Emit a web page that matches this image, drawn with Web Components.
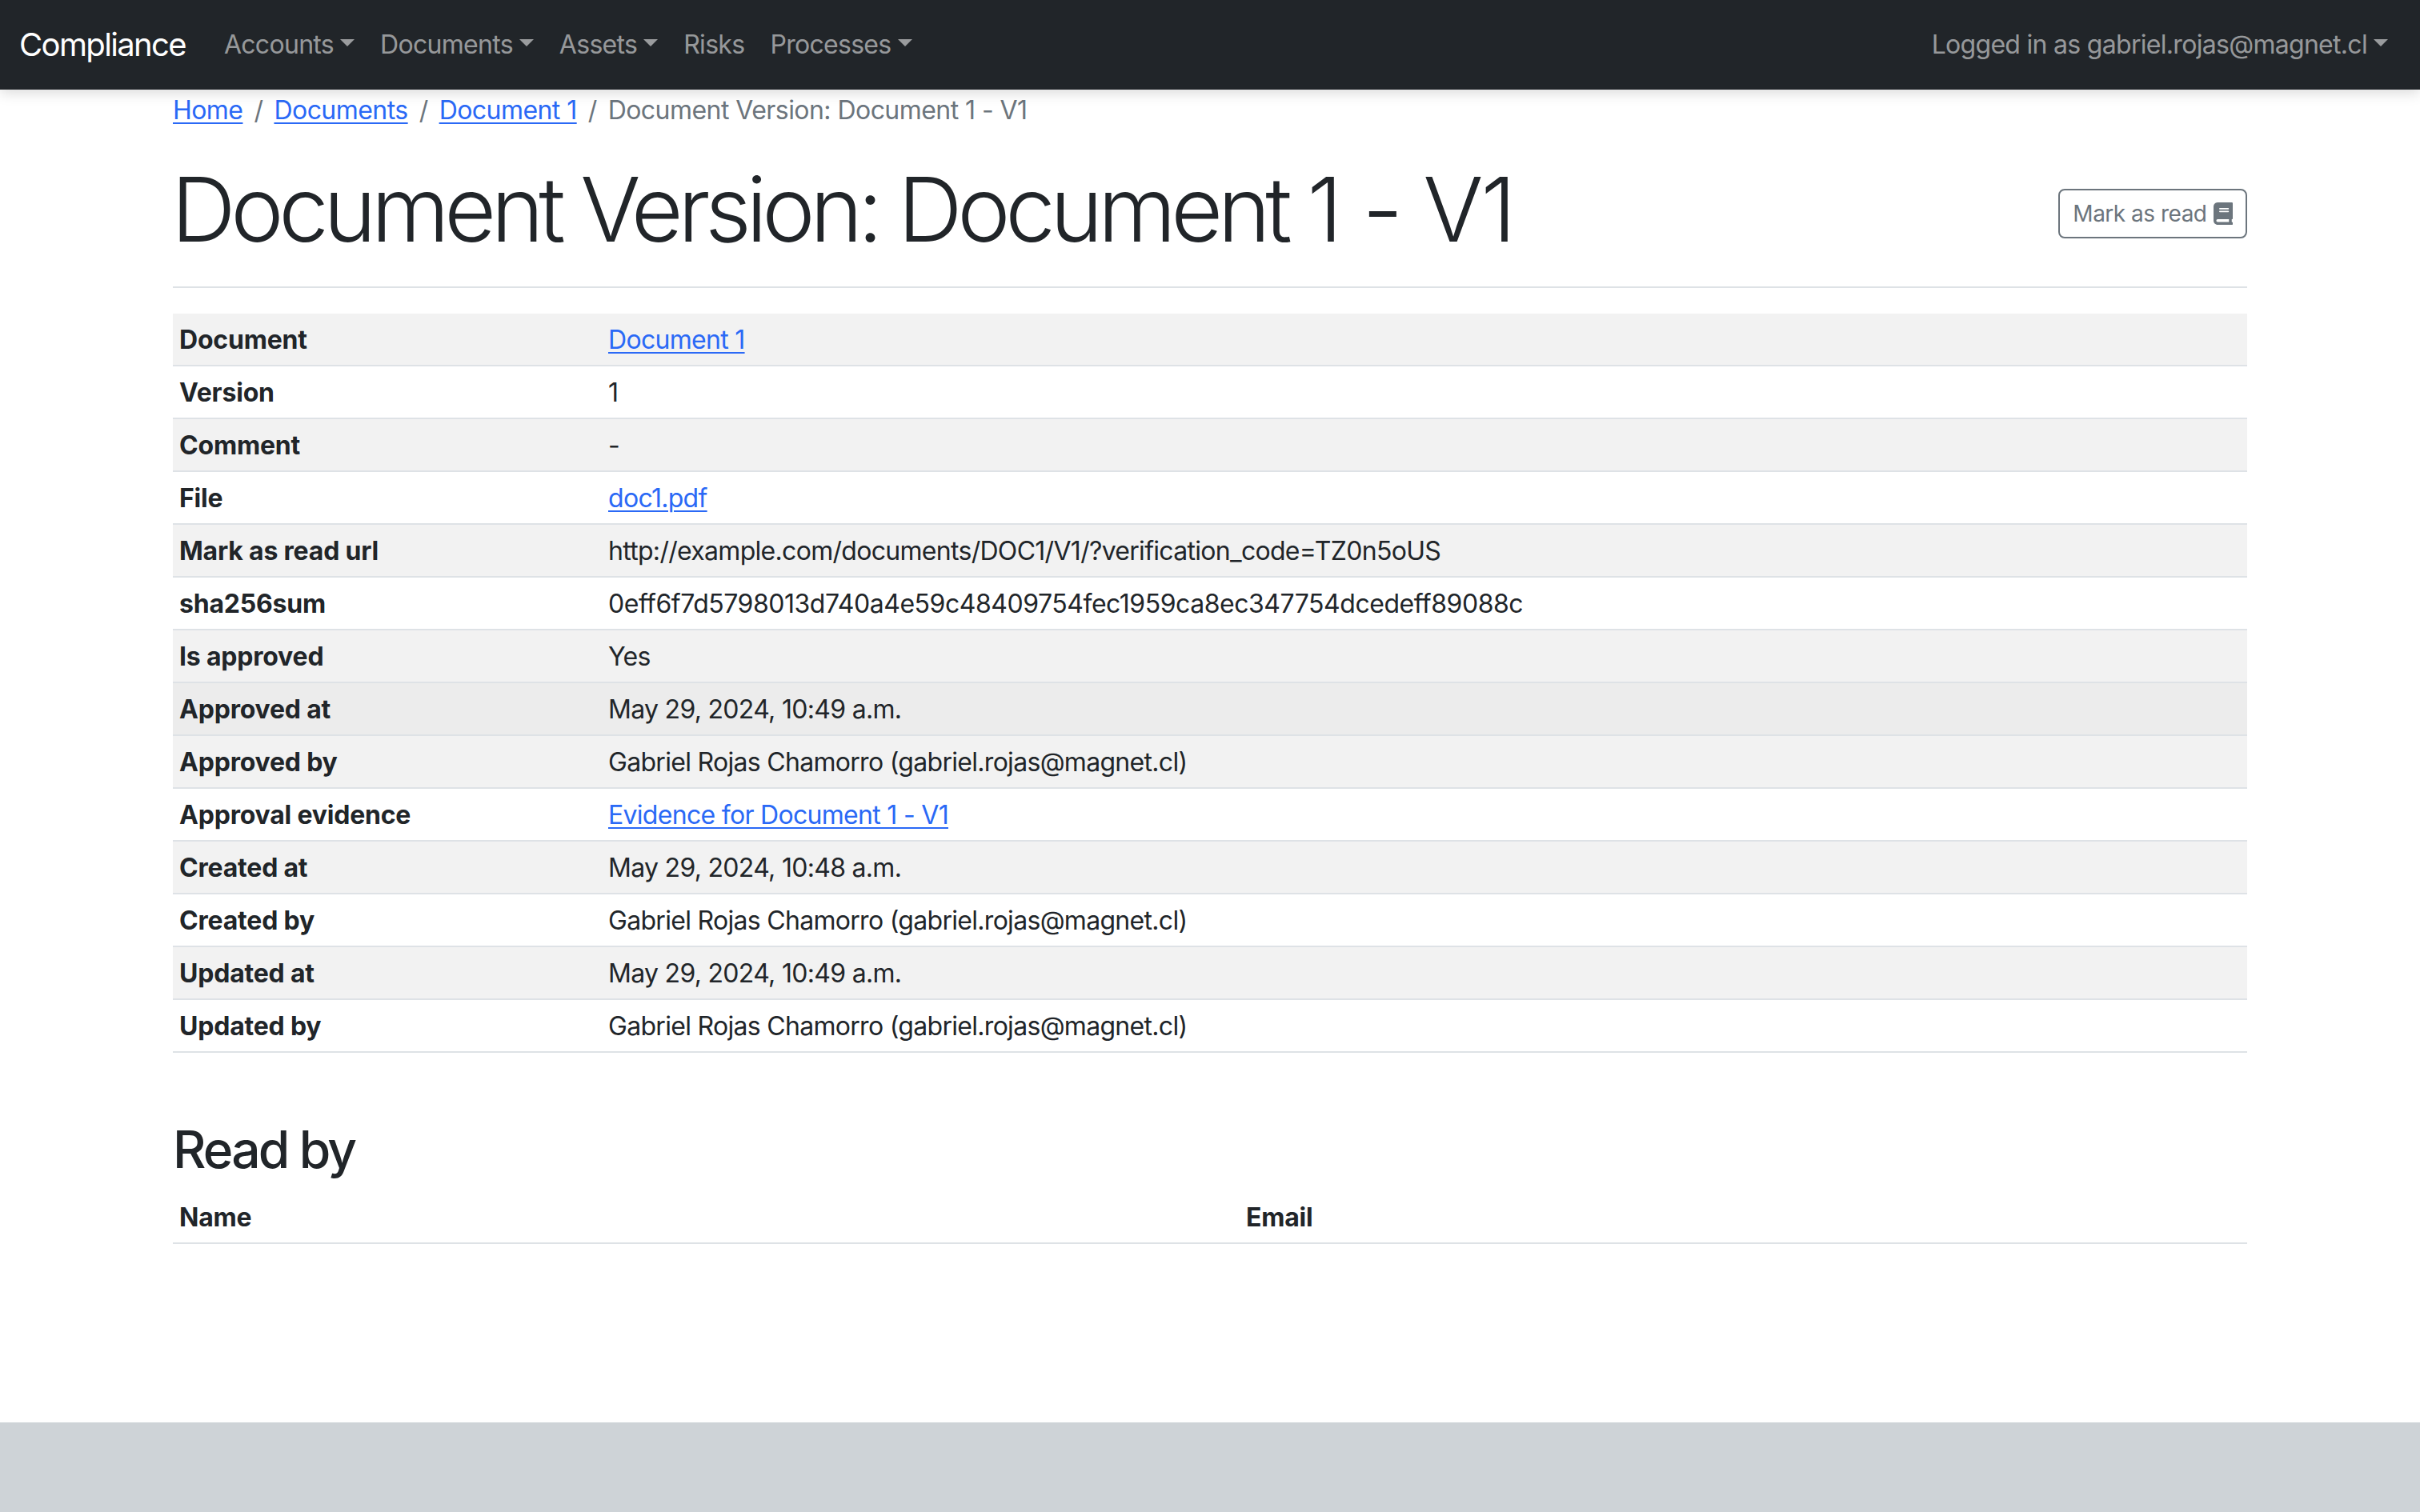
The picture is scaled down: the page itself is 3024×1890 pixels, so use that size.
<!DOCTYPE html>
<html lang="en">
<head>
<meta charset="utf-8">
<title>Document Version: Document 1 - V1</title>
<style>
	html, body { margin: 0; padding: 0; background: #fff; }
	body {
		font-family: Inter, "Liberation Sans", sans-serif;
		font-size: 32px;
		line-height: 48px;
		color: #212529;
		letter-spacing: -0.7px;
		height: 1890px;
		display: flex;
		flex-direction: column;
	}
	a { color: #2a69f6; text-decoration: underline; text-decoration-thickness: 2px; text-underline-offset: 4px; }
	.title-tail { letter-spacing: -3.2px; }
</style>
</head>
<body>
	<app-navbar brand="Compliance">
		<nav-item dropdown>Accounts</nav-item>
		<nav-item dropdown>Documents</nav-item>
		<nav-item dropdown>Assets</nav-item>
		<nav-item>Risks</nav-item>
		<nav-item dropdown>Processes</nav-item>
		<nav-item slot="end" dropdown>Logged in as gabriel.rojas@magnet.cl</nav-item>
	</app-navbar>

	<page-main>
		<bread-crumbs>
			<a href="#">Home</a>
			<a href="#">Documents</a>
			<a href="#">Document 1</a>
			<span>Document Version: Document 1 - V1</span>
		</bread-crumbs>

		<page-header>
			<span slot="title">Document Version: Document <span class="title-tail">1 - V1</span></span>
			<mark-button>Mark as read</mark-button>
		</page-header>

		<detail-table>
			<detail-row label="Document" striped><a href="#">Document 1</a></detail-row>
			<detail-row label="Version">1</detail-row>
			<detail-row label="Comment" striped>-</detail-row>
			<detail-row label="File"><a href="#">doc1.pdf</a></detail-row>
			<detail-row label="Mark as read url" striped>http://example.com/documents/DOC1/V1/?verification_code=TZ0n5oUS</detail-row>
			<detail-row label="sha256sum" style="letter-spacing: -0.47px">0eff6f7d5798013d740a4e59c48409754fec1959ca8ec347754dcedeff89088c</detail-row>
			<detail-row label="Is approved" striped>Yes</detail-row>
			<detail-row label="Approved at" hover>May 29, 2024, 10:49 a.m.</detail-row>
			<detail-row label="Approved by" striped>Gabriel Rojas Chamorro (gabriel.rojas@magnet.cl)</detail-row>
			<detail-row label="Approval evidence"><a href="#">Evidence for Document 1 - V1</a></detail-row>
			<detail-row label="Created at" striped>May 29, 2024, 10:48 a.m.</detail-row>
			<detail-row label="Created by">Gabriel Rojas Chamorro (gabriel.rojas@magnet.cl)</detail-row>
			<detail-row label="Updated at" striped>May 29, 2024, 10:49 a.m.</detail-row>
			<detail-row label="Updated by">Gabriel Rojas Chamorro (gabriel.rojas@magnet.cl)</detail-row>
		</detail-table>

		<read-by heading="Read by" first="Name" second="Email"></read-by>
	</page-main>

	<page-footer></page-footer>

<script>
class AppNavbar extends HTMLElement {
	constructor() {
		super();
		const shadow = this.attachShadow({mode: 'open'});
		shadow.innerHTML = `<style>
			:host {
				display: flex;
				align-items: center;
				flex: none;
				position: relative;
				height: 112px;
				padding: 0 24px;
				background: #212529;
				box-shadow: 0 4px 16px rgba(0, 0, 0, .15);
			}
			.brand {
				font-size: 40px;
				line-height: 60px;
				color: #fff;
				margin-right: 32px;
				letter-spacing: -1.65px;
			}
			nav { display: flex; }
			nav.end { margin-left: auto; }
		</style>
		<span class="brand"></span>
		<nav><slot></slot></nav>
		<nav class="end"><slot name="end"></slot></nav>`;
		shadow.querySelector('.brand').textContent = this.getAttribute('brand');
	}
}

class NavItem extends HTMLElement {
	constructor() {
		super();
		const shadow = this.attachShadow({mode: 'open'});
		shadow.innerHTML = `<style>
			:host {
				display: flex;
				align-items: center;
				padding: 0 16px;
				color: rgba(255, 255, 255, .55);
			}
			.caret {
				display: none;
				width: 0;
				height: 0;
				margin-left: 8px;
				margin-top: -6px;
				border-top: 9.6px solid currentColor;
				border-left: 9.6px solid transparent;
				border-right: 9.6px solid transparent;
			}
			:host([dropdown]) .caret { display: block; }
		</style>
		<slot></slot><span class="caret"></span>`;
	}
}

class PageMain extends HTMLElement {
	constructor() {
		super();
		const shadow = this.attachShadow({mode: 'open'});
		shadow.innerHTML = `<style>
			:host {
				display: block;
				flex: 1;
				padding: 0 216px;
			}
		</style>
		<slot></slot>`;
	}
}

class BreadCrumbs extends HTMLElement {
	constructor() {
		super();
		const shadow = this.attachShadow({mode: 'open'});
		shadow.innerHTML = `<style>
			:host {
				display: flex;
				box-sizing: border-box;
				height: 48px;
				padding-top: 2px;
				color: #6c757d;
				letter-spacing: -0.55px;
			}
			.sep { padding: 0 14px; }
		</style>
		<slot></slot>`;
		// a divider goes in front of every crumb but the first
		const items = Array.from(this.children);
		items.forEach(function(item, i) {
			item.slot = 'c' + i;
			if(i > 0) {
				const sep = document.createElement('span');
				sep.className = 'sep';
				sep.textContent = '/';
				shadow.appendChild(sep);
			}
			const slot = document.createElement('slot');
			slot.name = 'c' + i;
			shadow.appendChild(slot);
		});
	}
}

class PageHeader extends HTMLElement {
	constructor() {
		super();
		const shadow = this.attachShadow({mode: 'open'});
		shadow.innerHTML = `<style>
			:host {
				display: flex;
				align-items: center;
				justify-content: space-between;
				margin-top: 34px;
				padding-bottom: 18px;
				border-bottom: 2px solid #dee2e6;
			}
			h1 {
				margin: 0 0 12px -2px;
				font-size: 112px;
				line-height: 134px;
				font-weight: 300;
				letter-spacing: -6.4px;
			}
		</style>
		<h1><slot name="title"></slot></h1>
		<slot></slot>`;
	}
}

class MarkButton extends HTMLElement {
	constructor() {
		super();
		const shadow = this.attachShadow({mode: 'open'});
		shadow.innerHTML = `<style>
			:host {
				display: flex;
				align-items: center;
				gap: 8px;
				box-sizing: border-box;
				height: 62px;
				padding: 0 16px;
				border: 2px solid #6c757d;
				border-radius: 8px;
				color: #6c757d;
				font-size: 28px;
				line-height: 42px;
				letter-spacing: -0.5px;
			}
			svg { width: 24.5px; height: 28px; fill: currentColor; }
		</style>
		<slot></slot>
		<svg viewBox="0 0 448 512"><path d="M96 0C43 0 0 43 0 96V416c0 53 43 96 96 96H384h32c17.7 0 32-14.3 32-32s-14.3-32-32-32V384c17.7 0 32-14.3 32-32V32c0-17.7-14.3-32-32-32H384 96zm0 384H352v64H96c-17.7 0-32-14.3-32-32s14.3-32 32-32zm32-240c0-8.8 7.2-16 16-16H336c8.8 0 16 7.2 16 16s-7.2 16-16 16H144c-8.8 0-16-7.2-16-16zm16 48H336c8.8 0 16 7.2 16 16s-7.2 16-16 16H144c-8.8 0-16-7.2-16-16s7.2-16 16-16z"/></svg>`;
	}
}

class DetailTable extends HTMLElement {
	constructor() {
		super();
		const shadow = this.attachShadow({mode: 'open'});
		shadow.innerHTML = `<style>
			:host {
				display: block;
				margin-top: 32px;
			}
		</style>
		<slot></slot>`;
	}
}

class DetailRow extends HTMLElement {
	constructor() {
		super();
		const shadow = this.attachShadow({mode: 'open'});
		shadow.innerHTML = `<style>
			:host {
				display: grid;
				grid-template-columns: 536px 1fr;
				height: 66px;
				box-sizing: border-box;
				border-bottom: 2px solid #dee2e6;
			}
			:host([striped]) { background: #f2f2f2; }
			:host([hover]) { background: #ececec; }
			.cell { padding: 9px 8px 7px; }
			.label { font-weight: 700; letter-spacing: -0.2px; }
		</style>
		<div class="cell label"></div>
		<div class="cell"><slot></slot></div>`;
		shadow.querySelector('.label').textContent = this.getAttribute('label');
	}
}

class ReadBy extends HTMLElement {
	constructor() {
		super();
		const shadow = this.attachShadow({mode: 'open'});
		shadow.innerHTML = `<style>
			:host {
				display: block;
				margin-top: 82px;
			}
			h3 {
				margin: 0 0 14px;
				font-size: 64px;
				line-height: 77px;
				font-weight: 500;
				letter-spacing: -2.8px;
			}
			.head {
				display: grid;
				grid-template-columns: 1333px 1fr;
				height: 66px;
				box-sizing: border-box;
				border-bottom: 2px solid #dee2e6;
				font-weight: 700;
				letter-spacing: -0.2px;
			}
			.head div { padding: 9px 8px 7px; }
		</style>
		<h3></h3>
		<div class="head"><div class="a"></div><div class="b"></div></div>`;
		shadow.querySelector('h3').textContent = this.getAttribute('heading');
		shadow.querySelector('.a').textContent = this.getAttribute('first');
		shadow.querySelector('.b').textContent = this.getAttribute('second');
	}
}

class PageFooter extends HTMLElement {
	constructor() {
		super();
		const shadow = this.attachShadow({mode: 'open'});
		shadow.innerHTML = `<style>
			:host {
				display: block;
				flex: none;
				height: 112px;
				background: #ced3d7;
			}
		</style>`;
	}
}

customElements.define('app-navbar', AppNavbar);
customElements.define('nav-item', NavItem);
customElements.define('page-main', PageMain);
customElements.define('bread-crumbs', BreadCrumbs);
customElements.define('page-header', PageHeader);
customElements.define('mark-button', MarkButton);
customElements.define('detail-table', DetailTable);
customElements.define('detail-row', DetailRow);
customElements.define('read-by', ReadBy);
customElements.define('page-footer', PageFooter);
</script>
</body>
</html>
